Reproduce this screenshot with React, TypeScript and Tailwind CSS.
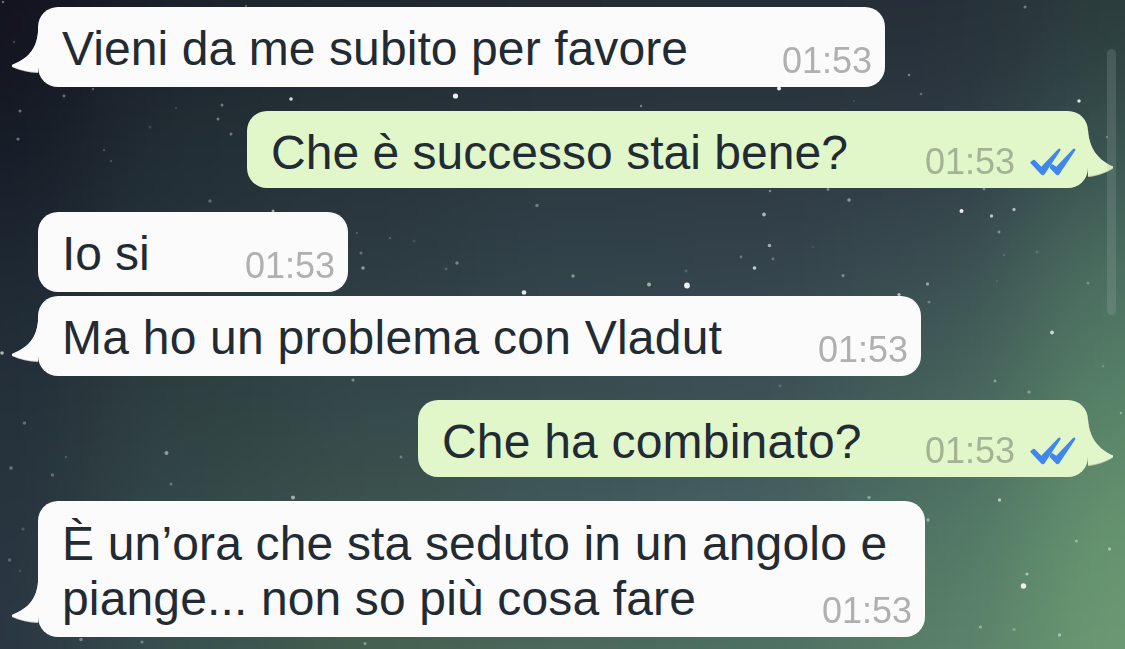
type Message = {
    lines: string[];
    time: string;
    own?: boolean;
    tail?: boolean;
    box: string;
    spacing: string[];
};

const messages: Message[] = [
    {
        lines: ["Vieni da me subito per favore"],
        time: "01:53",
        tail: true,
        box: "w-[847px] h-20",
        spacing: ["tracking-[0.09px]"],
    },
    {
        lines: ["Che è successo stai bene?"],
        time: "01:53",
        own: true,
        tail: true,
        box: "mt-6 w-[841px] h-[77px]",
        spacing: ["tracking-[0.02px]"],
    },
    {
        lines: ["Io si"],
        time: "01:53",
        box: "mt-6 w-[310px] h-20",
        spacing: ["tracking-[-0.1px]"],
    },
    {
        lines: ["Ma ho un problema con Vladut"],
        time: "01:53",
        tail: true,
        box: "mt-1 w-[883px] h-20",
        spacing: ["tracking-[0.23px]"],
    },
    {
        lines: ["Che ha combinato?"],
        time: "01:53",
        own: true,
        tail: true,
        box: "mt-6 w-[670px] h-[77px]",
        spacing: ["tracking-[0.2px]"],
    },
    {
        lines: ["È un’ora che sta seduto in un angolo e", "piange... non so più cosa fare"],
        time: "01:53",
        tail: true,
        box: "mt-6 w-[887px] h-[136px]",
        spacing: ["tracking-[0.16px]", "tracking-[0.14px]"],
    },
];

// night sky colours, left to right and top to bottom
const sky = [
    ["#12121e", "#1b212a", "#20272f", "#232931", "#242d34", "#252e37", "#2b3b3b"],
    ["#151a25", "#222e35", "#263239", "#2a363e", "#2b3740", "#2d3843", "#36504d"],
    ["#1c2731", "#27343b", "#2c3a41", "#31424a", "#33424b", "#394c50", "#4b6f60"],
    ["#242f3a", "#2e403f", "#33484a", "#384d50", "#3c4f55", "#44605b", "#578268"],
    ["#27333d", "#35494a", "#3d534d", "#41595a", "#466060", "#4f7565", "#66946f"],
    ["#2a3743", "#3a5250", "#466250", "#4b6a5c", "#4e7162", "#5a8069", "#6d9b73"],
];

// x, y, radius, opacity
const stars = [
    [3, 2, 1.2, 0.4], [14, 42, 1.2, 0.2], [246, 6, 1.2, 0.3],
    [64, 96, 1.4, 0.4], [93, 89, 1.2, 0.3], [20, 111, 1.5, 0.4], [18, 139, 1.6, 0.4],
    [291, 99, 1.8, 0.9], [222, 105, 1.5, 0.4], [218, 119, 1.5, 0.4], [231, 134, 1.5, 0.4],
    [176, 108, 1.2, 0.15], [150, 127, 1.5, 0.15], [104, 150, 1.2, 0.2], [111, 161, 1.2, 0.2],
    [210, 201, 1.7, 0.3], [273, 211, 1.5, 0.6],
    [455.5, 96, 2.6, 1], [641, 106, 1.2, 0.4], [779, 88.5, 2, 1], [854, 101, 1, 0.15],
    [909, 75, 1.3, 0.4], [921, 94, 1.3, 0.3], [1025, 7, 1.5, 0.4], [1079, 101, 1.7, 0.9],
    [1107, 137, 1.2, 0.3], [984, 189, 1.4, 0.4],
    [537, 205.5, 1.8, 0.35], [357, 233, 1.2, 0.2], [390, 238, 1.3, 0.2],
    [414, 241, 1.5, 0.12], [361, 253, 1.5, 0.3], [363, 268, 1.8, 0.5],
    [457, 263, 1.7, 0.4], [446, 269, 1.4, 0.2], [524, 292.5, 2.3, 0.95],
    [573, 276, 1.8, 0.45], [649, 284.5, 2, 0.6], [687, 285.5, 2.9, 1], [686, 271, 1.4, 0.2],
    [770, 191, 1.3, 0.4], [764, 214.5, 1.9, 0.65], [828, 189.5, 1.4, 0.4],
    [849, 200, 1.8, 0.5], [769.5, 245.5, 1.8, 0.6], [754.5, 268, 1.8, 0.8],
    [741, 257, 1.4, 0.3], [773, 259, 1.4, 0.3], [813, 247, 1.2, 0.1], [843, 275.5, 1.6, 0.4],
    [961.5, 211, 2, 1], [991.5, 216, 1.7, 0.7], [1014, 209.5, 1.7, 0.65], [999, 232, 1.4, 0.4],
    [1004, 255, 1.2, 0.15], [1037, 252, 1.5, 0.15], [927.5, 284, 1.7, 0.5],
    [929, 302, 1.6, 0.3], [899, 294.5, 1.6, 0.7], [997, 281, 1.1, 0.15],
    [1088, 283, 1.5, 0.3], [1052, 332.5, 1.9, 0.8], [995, 381, 1.5, 0.4],
    [1029, 392, 1.6, 0.4], [780, 386, 1.4, 0.2], [1103, 366, 1.3, 0.2],
    [2, 353, 1.8, 0.7], [353, 380, 1.6, 0.4], [24.5, 423, 1.8, 0.3], [11, 468, 1.8, 0.35],
    [52.5, 475, 1.7, 0.3], [66, 457, 1.2, 0.2], [166.5, 453, 2, 0.5], [171, 484, 1.5, 0.3],
    [293, 497.5, 2, 0.6], [401, 457, 1.4, 0.3], [23, 529, 1.6, 0.2], [9.5, 560, 1.8, 0.25],
    [20, 571, 1.4, 0.15], [81, 639.5, 1.8, 0.4], [142, 642, 1.6, 0.35], [365, 643.5, 1.6, 0.4],
    [869, 497.5, 1.8, 0.4], [928, 520, 1.7, 0.45], [999.5, 500, 1.7, 0.65],
    [1076.5, 541, 1.6, 0.4], [1109.5, 549, 1.7, 0.5], [1027, 574, 1.6, 0.55],
    [1023.5, 586, 2.7, 1], [980.5, 627, 1.6, 0.4], [1014, 629.5, 1.6, 0.3],
    [1059.5, 635, 1.7, 0.5], [1121, 413, 1.3, 0.35],
];

const Wallpaper = () => (
    <svg className="absolute inset-0 -z-10" width="1125" height="649" aria-hidden="true">
        <defs>
            <filter id="soft" x="-10%" y="-10%" width="120%" height="120%" colorInterpolationFilters="sRGB">
                <feGaussianBlur stdDeviation="58" />
            </filter>
            <filter id="glow" colorInterpolationFilters="sRGB">
                <feGaussianBlur stdDeviation="0.65" />
            </filter>
        </defs>
        <rect width="1125" height="649" fill="#33434b" />
        <g filter="url(#soft)">
            {sky.map((row, r) =>
                row.map((color, c) => {
                    const left = c === 0 ? -300 : c * 187.5 - 94;
                    const right = c === 6 ? 1425 : c * 187.5 + 95;
                    const top = r === 0 ? -300 : r * 130 - 65;
                    const bottom = r === 5 ? 950 : r * 130 + 66;
                    return (
                        <rect
                            key={`${r}-${c}`}
                            x={left}
                            y={top}
                            width={right - left}
                            height={bottom - top}
                            fill={color}
                        />
                    );
                })
            )}
        </g>
        <g fill="#eef2f3" filter="url(#glow)">
            {stars.map(([x, y, radius, opacity], i) => (
                <circle key={i} cx={x} cy={y} r={radius} opacity={opacity} />
            ))}
        </g>
    </svg>
);

const Ticks = () => (
    <svg className="ml-[15px] mb-3 shrink-0" width="46" height="28" viewBox="0 0 46 28">
        <g fill="#3f87ee">
            <path d="M0.3 14.200 3.400 11.700Q4.300 11.500 5 12.300L11.300 18.800 28.200 1Q30.600-.2 30.700 2.100L14.800 26.100Q12.900 28.400 10.900 26.200L.4 15.100Z" />
            <path d="M19.800 18.400 21.900 15.700 26.300 18.800 43 1Q45.400-.2 45.500 2.100L29.500 26.100Q27.600 28.400 25.700 26.300L20 20.200Z" />
        </g>
    </svg>
);

const Tail = ({ own }: { own?: boolean }) =>
    own ? (
        <svg className="absolute left-full bottom-[10px] blur-[0.3px]" width="26" height="60" viewBox="0 0 26 60">
            <path d="M0 59.500V12C1 32 12 43 25 48.500V50.500C18 55 9 58.500 0 59Z" fill="#c2cbb2" />
            <path d="M0 58V12C1 32 12 43 25 48.500V50C18 54 9 57.500 0 58Z" fill="#e1f6c9" />
        </svg>
    ) : (
        <svg className="absolute right-full bottom-[13px] blur-[0.3px]" width="27" height="60" viewBox="0 0 27 60">
            <path d="M27 59V18C25.500 36 16 45 1 51V53C9 57 18 58.500 27 59Z" fill="#cfd1d3" />
            <path d="M27 58V18C25.500 36 16 45 1 51V52.500C9 56 18 57.500 27 58Z" fill="#fbfbfb" />
        </svg>
    );

const Bubble = ({ message }: { message: Message }) => {
    const { lines, time, own, tail, box, spacing } = message;
    return (
        <div
            className={`relative flex shrink-0 items-end rounded-[20px] pl-6 ${box} ${
                own ? "self-end bg-[#e1f6c9]" : "self-start bg-[#fbfbfb]"
            }`}
        >
            {tail && <Tail own={own} />}
            <div className={`text-[48px] leading-[55px] text-[#222b33] ${own ? "pb-2" : "pb-[11px]"}`}>
                {lines.map((line, i) => (
                    <p key={line} className={`h-[55px] whitespace-nowrap ${spacing[i]}`}>
                        {line}
                    </p>
                ))}
            </div>
            <div className={`absolute bottom-0 flex items-end ${own ? "right-3" : "right-[13px]"}`}>
                <span
                    className={`pb-[6px] text-[36px] leading-10 ${
                        own ? "text-[#a4b395]" : "text-[#b0b0b0]"
                    }`}
                >
                    {time}
                </span>
                {own && <Ticks />}
            </div>
        </div>
    );
};

export default function App() {
    return (
        <main className="relative isolate h-[649px] w-[1125px] overflow-hidden bg-[#33434b] font-['Liberation_Sans',Arial,sans-serif]">
            <Wallpaper />
            <div className="flex flex-col pt-[7px] pr-[37px] pl-[38px]">
                {messages.map((message, i) => (
                    <Bubble key={i} message={message} />
                ))}
            </div>
            <div className="absolute top-[49px] right-[9px] h-[266px] w-[9px] rounded-full bg-[#aab7b7]/20" />
        </main>
    );
}
